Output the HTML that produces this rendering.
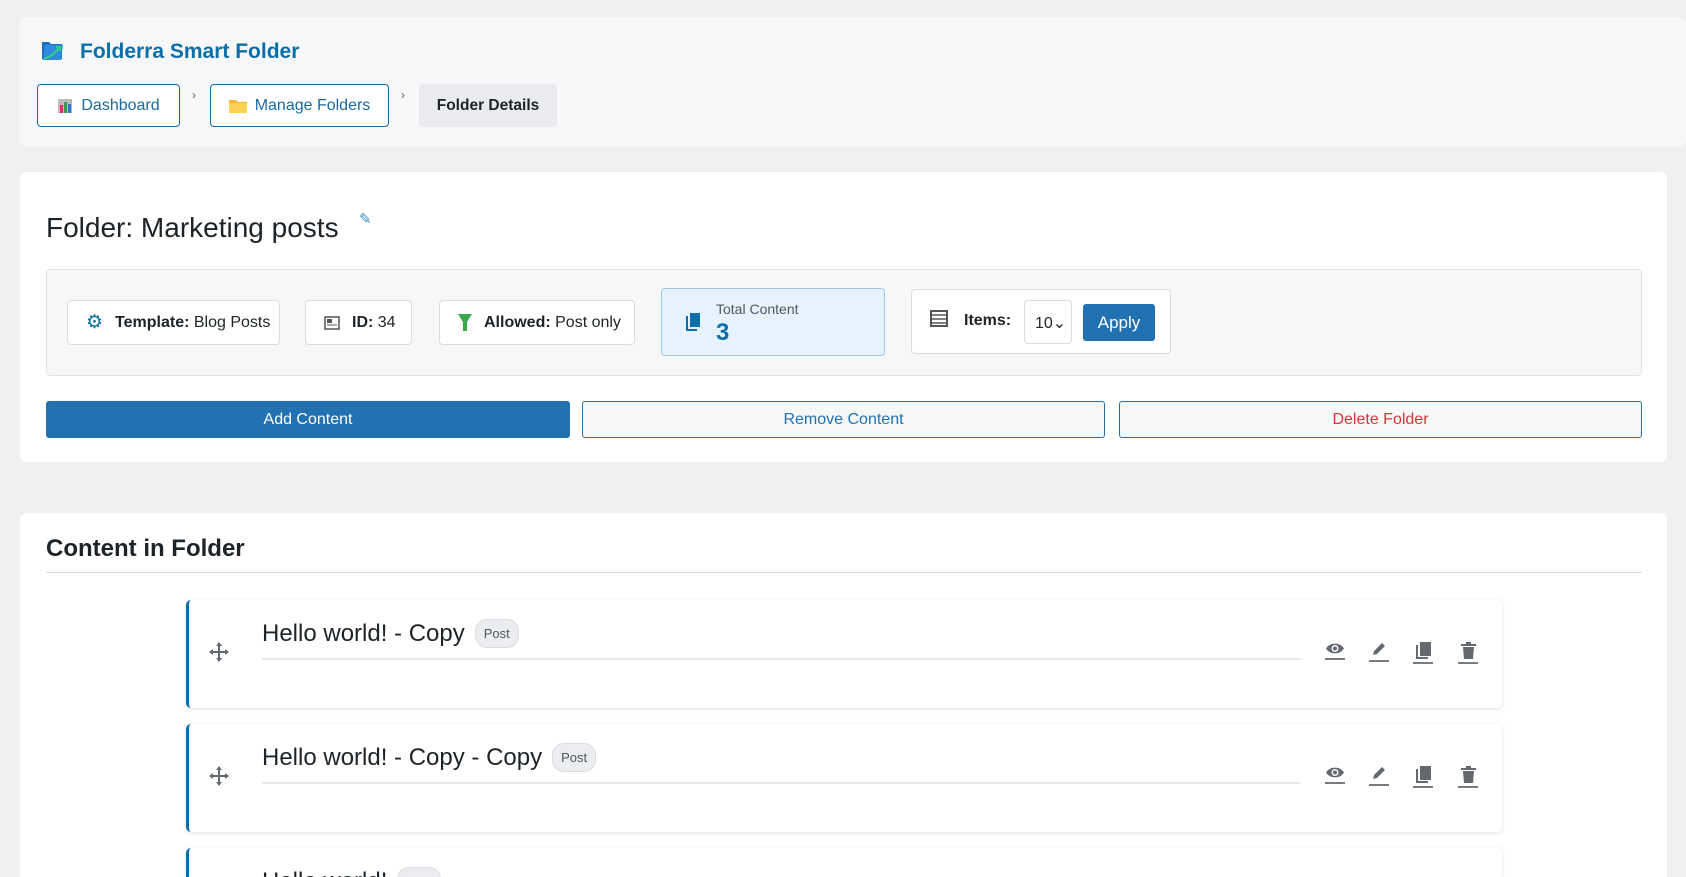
<!DOCTYPE html>
<html style="width:1686px;height:877px;overflow:hidden"><head><meta charset="utf-8"><style>
*{box-sizing:border-box;margin:0;padding:0}
body{width:1686px;height:877px;overflow:hidden;background:#f0f0f1;font-family:"Liberation Sans",sans-serif;color:#1d2327;position:relative}
.abs{position:absolute}
.hdr{left:19px;top:17px;width:1667px;height:129px;background:#f6f7f8;border-radius:6px}
.title{left:80px;top:40px;font-size:21px;font-weight:bold;color:#0a6fa8}
.bc{top:84px;height:43px;border:1px solid #1a6aa0;border-radius:4px;background:#fff;color:#1a6aa0;font-size:16px;display:flex;align-items:center;justify-content:center;gap:8px}
.sep{top:88px;font-size:12px;color:#666}
.card{background:#fff;border-radius:6px;left:20px;width:1647px}
.info{left:46px;top:269px;width:1596px;height:107px;background:#f6f7f7;border:1px solid #e2e4e7;border-radius:4px}
.chip{height:45px;top:300px;background:#fff;border:1px solid #dcdcde;border-radius:4px;display:flex;align-items:center;padding-left:18px;gap:12px;font-size:16px}
.btn{top:401px;height:37px;border-radius:3px;display:flex;align-items:center;justify-content:center;font-size:16px}
.item{left:186px;width:1316px;height:108px;background:#fff;border-left:3px solid #0a6fa8;border-radius:5px;box-shadow:0 1px 4px rgba(0,0,0,.12)}
.it{position:absolute;left:73px;top:19px;font-size:24px;color:#1d2327;display:flex;align-items:center;gap:10px}
.badge{font-size:13px;color:#50575e;background:#ebedf0;border:1px solid #dcdcde;border-radius:12px;padding:6px 8px}
.dv{position:absolute;left:73px;top:58px;width:1038px;height:2px;background:#e6e8ea}
.ic{position:absolute;top:42px;width:20px;border-bottom:2px solid #787c82;padding-bottom:3px;display:flex;justify-content:center}
.mv{position:absolute;left:20px;top:42px}
</style></head><body>
<div class="abs hdr"></div>
<svg class="abs" style="left:39px;top:38px" width="27" height="25" viewBox="0 0 27 25"><path d="M3 4h7l2 2h11v15H3z" fill="#1e6fc0"/><path d="M6 7h18l-2 15H4z" fill="#2f8ae0"/><path d="M5 21c6-2 11-6 15-11" stroke="#2ecc8a" stroke-width="2.5" fill="none"/><path d="M17 9l4 0 0 4" stroke="#2ecc8a" stroke-width="2.5" fill="none"/></svg>
<div class="abs title">Folderra Smart Folder</div>
<div class="abs bc" style="left:37px;width:143px"><svg width="16" height="16"><rect x="1" y="1" width="14" height="14" fill="#bbb"/><rect x="3" y="7" width="3" height="8" fill="#e0306a"/><rect x="7" y="4" width="3" height="11" fill="#3a9a4a"/><rect x="11" y="6" width="3" height="9" fill="#3b6fd0"/></svg>Dashboard</div>
<div class="abs sep" style="left:192px">›</div>
<div class="abs bc" style="left:210px;width:179px"><svg width="18" height="15"><path d="M0 2h7l2 2h9v11H0z" fill="#f5b82e"/><path d="M0 5h18v10H0z" fill="#fcd15a"/></svg>Manage Folders</div>
<div class="abs sep" style="left:401px">›</div>
<div class="abs bc" style="left:419px;width:138px;background:#e9ebee;border-color:#e9ebee;color:#1d2327;font-weight:bold;font-size:15.5px">Folder Details</div>

<div class="abs card" style="top:172px;height:290px"></div>
<div class="abs" style="left:46px;top:212px;font-size:28px">Folder: Marketing posts</div>
<div class="abs" style="left:359px;top:210px;color:#3d8fc8;font-size:15px">✎</div>
<div class="abs info"></div>
<div class="abs chip" style="left:67px;width:213px"><span style="color:#0a6fa8;font-size:19px">⚙</span><span><b>Template:</b> Blog Posts</span></div>
<div class="abs chip" style="left:305px;width:107px"><svg width="16" height="14"><rect x="1" y="1" width="14" height="12" fill="none" stroke="#555" stroke-width="1.5"/><rect x="3" y="3" width="5" height="4" fill="#555"/><path d="M3 9h10" stroke="#555"/></svg><span><b>ID:</b> 34</span></div>
<div class="abs chip" style="left:439px;width:196px"><svg width="14" height="18"><path d="M0 0h14l-5 8v9H5V8z" fill="#3aa84a"/></svg><span><b>Allowed:</b> Post only</span></div>
<div class="abs" style="left:661px;top:288px;width:224px;height:68px;background:#e6f2fd;border:1px solid #9ec8ee;border-radius:4px">
<svg class="abs" style="left:24px;top:24px" width="14" height="18"><rect x="4" y="0" width="10" height="14" fill="#0a6fa8"/><path d="M1 3v14h10" stroke="#0a6fa8" stroke-width="2" fill="none"/></svg>
<div class="abs" style="left:54px;top:12px;font-size:14px;color:#50575e">Total Content</div>
<div class="abs" style="left:54px;top:30px;font-size:24px;font-weight:bold;color:#0a6fa8">3</div></div>
<div class="abs" style="left:911px;top:289px;width:260px;height:65px;background:#fff;border:1px solid #dcdcde;border-radius:4px">
<svg class="abs" style="left:18px;top:20px" width="18" height="17"><rect x="1" y="1" width="16" height="15" fill="none" stroke="#555" stroke-width="2"/><path d="M1 5h16M1 9h16M1 13h16" stroke="#555" stroke-width="1.5"/></svg>
<div class="abs" style="left:52px;top:22px;font-size:16px;font-weight:bold">Items:</div>
<div class="abs" style="left:112px;top:10px;width:48px;height:44px;border:1px solid #dcdcde;border-radius:4px;font-size:16px;padding:12px 0 0 10px">10⌄</div>
<div class="abs" style="left:171px;top:14px;width:72px;height:37px;background:#2271b1;border-radius:3px;color:#fff;font-size:17px;display:flex;align-items:center;justify-content:center">Apply</div></div>
<div class="abs btn" style="left:46px;width:524px;background:#2271b1;color:#fff">Add Content</div>
<div class="abs btn" style="left:582px;width:523px;background:#f6f7f7;border:1px solid #2271b1;color:#2271b1">Remove Content</div>
<div class="abs btn" style="left:1119px;width:523px;background:#f6f7f7;border:1px solid #2271b1;color:#d63638">Delete Folder</div>

<div class="abs card" style="top:513px;height:364px;border-radius:6px 6px 0 0"></div>
<div class="abs" style="left:46px;top:535px;font-size:24px;font-weight:bold">Content in Folder</div>
<div class="abs" style="left:46px;top:572px;width:1596px;height:1px;background:#dcdcde"></div>

<div class="abs item" style="top:600px">
<svg class="mv" width="20" height="20" viewBox="0 0 20 20"><path d="M10 1v18M1 10h18" stroke="#646970" stroke-width="2"/><path d="M10 0l-3 4h6zM10 20l-3-4h6zM0 10l4-3v6zM20 10l-4-3v6z" fill="#646970"/></svg>
<div class="it">Hello world! - Copy <span class="badge">Post</span></div><div class="dv"></div>
<div class="ic" style="left:1136px"><svg width="20" height="13"><path d="M1 6.5C5 0 15 0 19 6.5 15 13 5 13 1 6.5z" fill="#646970"/><circle cx="10" cy="6.5" r="3.5" fill="#fff"/><circle cx="10" cy="6.5" r="2" fill="#646970"/></svg></div>
<div class="ic" style="left:1180px"><svg width="16" height="15"><path d="M2 13l1-4 8-8 3 3-8 8z" fill="#646970"/></svg></div>
<div class="ic" style="left:1224px"><svg width="16" height="17"><rect x="5" y="0" width="11" height="14" fill="#646970"/><path d="M2 3v13h11" stroke="#646970" stroke-width="2" fill="none"/></svg></div>
<div class="ic" style="left:1269px"><svg width="15" height="17"><rect x="0" y="2" width="15" height="2" fill="#646970"/><rect x="5" y="0" width="5" height="2" fill="#646970"/><path d="M2 5h11l-1 12H3z" fill="#646970"/></svg></div>
</div>

<div class="abs item" style="top:724px">
<svg class="mv" width="20" height="20" viewBox="0 0 20 20"><path d="M10 1v18M1 10h18" stroke="#646970" stroke-width="2"/><path d="M10 0l-3 4h6zM10 20l-3-4h6zM0 10l4-3v6zM20 10l-4-3v6z" fill="#646970"/></svg>
<div class="it">Hello world! - Copy - Copy <span class="badge">Post</span></div><div class="dv"></div>
<div class="ic" style="left:1136px"><svg width="20" height="13"><path d="M1 6.5C5 0 15 0 19 6.5 15 13 5 13 1 6.5z" fill="#646970"/><circle cx="10" cy="6.5" r="3.5" fill="#fff"/><circle cx="10" cy="6.5" r="2" fill="#646970"/></svg></div>
<div class="ic" style="left:1180px"><svg width="16" height="15"><path d="M2 13l1-4 8-8 3 3-8 8z" fill="#646970"/></svg></div>
<div class="ic" style="left:1224px"><svg width="16" height="17"><rect x="5" y="0" width="11" height="14" fill="#646970"/><path d="M2 3v13h11" stroke="#646970" stroke-width="2" fill="none"/></svg></div>
<div class="ic" style="left:1269px"><svg width="15" height="17"><rect x="0" y="2" width="15" height="2" fill="#646970"/><rect x="5" y="0" width="5" height="2" fill="#646970"/><path d="M2 5h11l-1 12H3z" fill="#646970"/></svg></div>
</div>

<div class="abs item" style="top:848px;height:29px;overflow:hidden;border-radius:5px 5px 0 0">
<div class="it">Hello world! <span class="badge">Post</span></div>
</div>
</body></html>
